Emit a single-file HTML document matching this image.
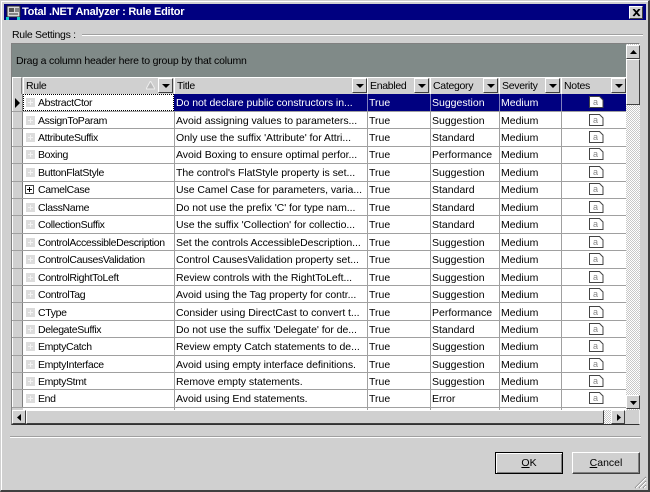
<!DOCTYPE html>
<html><head><meta charset="utf-8"><style>
html,body{margin:0;padding:0}
body{width:650px;height:492px;overflow:hidden;position:relative;background:#d0d0d0;font:10.5px/14px "Liberation Sans",sans-serif;color:#000}
.a{position:absolute}
#win{left:0;top:0;border-top:1px solid #d0d0d0;border-left:1px solid #d0d0d0;border-right:2px solid #404040;border-bottom:2px solid #404040;box-sizing:content-box;width:647px;height:489px;box-shadow:inset 1px 1px 0 #fff}
#tb{left:4px;top:4px;width:642px;height:16px;background:#000080;color:#fff;font:bold 11px/17px "Liberation Sans",sans-serif;letter-spacing:-.25px}
.r{position:absolute;left:12px;width:614px;height:18px;background:#fff}
.r span{position:absolute;top:2px;white-space:nowrap;overflow:hidden}
.r span.s{left:0;width:9px;top:0;height:18px;background:#d0d0d0;border-right:1px solid #808080;border-left:1px solid #fff}
.c1{left:26px;width:135px;letter-spacing:-.35px}.c2{left:164px;width:190px;letter-spacing:-.05px}.c3{left:357px;width:60px}.c4{left:420px;width:66px}.c5{left:489px;width:60px}
.v{position:absolute;top:0;width:1px;height:18px;background:#a0a0a0}
.l{position:absolute;left:12px;width:614px;height:1px;background:#a0a0a0}
.p{position:absolute;left:14px;top:4px;width:9px;height:9px;background:#dcdcdc}
.p:after{content:"";position:absolute;left:2px;top:4px;width:5px;height:1px;background:#f4f4f4}
.p:before{content:"";position:absolute;left:4px;top:2px;width:1px;height:5px;background:#f4f4f4}
.n{position:absolute;left:577px;top:2px}
.n path{stroke:#444}
.h{position:absolute;top:77px;height:16px;background:#d0d0d0;border-top:1px solid #fff;border-left:1px solid #fff;border-right:1px solid #808080;border-bottom:1px solid #808080;font-size:10.5px;line-height:16px;padding-left:2px;box-sizing:content-box;white-space:nowrap;overflow:hidden;letter-spacing:-.3px}
.f{position:absolute;right:1px;top:0;width:13px;height:13px;background:#d0d0d0;border-top:1px solid #fff;border-left:1px solid #fff;border-right:1px solid #404040;border-bottom:1px solid #404040}
.f:after{content:"";position:absolute;left:3px;top:5px;border-left:4px solid transparent;border-right:4px solid transparent;border-top:4px solid #000}
.b{position:absolute;background:#d0d0d0;border-top:1px solid #fff;border-left:1px solid #fff;border-right:1px solid #404040;border-bottom:1px solid #404040;box-sizing:border-box}
.sel,.sel span{color:#fff}
.btn{position:absolute;top:452px;width:68px;height:22px;box-sizing:border-box;background:#d0d0d0;text-align:center;font-size:10.5px;line-height:20px;border-top:1px solid #fff;border-left:1px solid #fff;border-right:1px solid #404040;border-bottom:1px solid #404040}
u{text-decoration:underline}
.chk{background-color:#e4e4e4;background-image:repeating-conic-gradient(#fff 0 25%,#c8c8c8 0 50%);background-size:2px 2px}
</style></head><body>
<div id="win" class="a"></div>
<div id="tb" class="a"><svg class="a" style="left:2px;top:1px" width="16" height="15"><rect x="1" y="1" width="13" height="11" fill="#d8d8d8" stroke="#222"/><rect x="3" y="3" width="5" height="4" fill="#555"/><path d="M9 4h4M9 6h4M3 9h9" stroke="#333"/><rect x="0" y="12" width="3" height="3" fill="#1cc"/><rect x="11" y="12" width="3" height="3" fill="#1cc"/></svg><span class="a" style="left:18px;top:0;white-space:nowrap">Total .NET Analyzer : Rule Editor</span>
<div class="b" style="left:625px;top:2px;width:14px;height:13px"><svg class="a" style="left:2px;top:2px" width="9" height="8"><path d="M1 0l6 7M2 0l6 7M7 0l-6 7M8 0l-6 7" stroke="#000"/></svg></div></div>
<div class="a" style="left:12px;top:28px;white-space:nowrap;letter-spacing:-.3px">Rule Settings :</div>
<div class="a" style="left:82px;top:34px;width:561px;height:1px;background:#a0a0a0;border-bottom:1px solid #fff"></div>

<div class="a" style="left:11px;top:43px;width:629px;height:382px;background:#d0d0d0;border-top:1px solid #808080;border-left:1px solid #808080;border-right:1px solid #f0f0f0;border-bottom:1px solid #303030;box-sizing:border-box"></div>
<div class="a" style="left:12px;top:44px;width:614px;height:33px;background:#808a88"></div>
<div class="a" style="left:16px;top:54px;white-space:nowrap;letter-spacing:-.2px">Drag a column header here to group by that column</div>

<div class="h" style="left:12px;width:8px;padding:0"></div>
<div class="h" style="left:23px;width:148px">Rule<svg class="a" style="left:122px;top:3px" width="9" height="9"><path d="M4.500 0L9 8H0z" fill="#bbb" stroke="#eee"/></svg><i class="f"></i></div>
<div class="h" style="left:174px;width:191px">Title<i class="f"></i></div>
<div class="h" style="left:367px;width:60px">Enabled<i class="f"></i></div>
<div class="h" style="left:430px;width:66px">Category<i class="f"></i></div>
<div class="h" style="left:499px;width:59px">Severity<i class="f"></i></div>
<div class="h" style="left:561px;width:63px">Notes<i class="f"></i></div>

<div class="r sel" style="top:94px"><span class="s"></span><span style="left:162px;top:0;width:452px;height:18px;background:#000080"></span><span class="c1" style="color:#000">AbstractCtor</span><span class="c2">Do not declare public constructors in...</span><span class="c3">True</span><span class="c4">Suggestion</span><span class="c5">Medium</span>
<svg class="a" style="left:3px;top:4px" width="6" height="10"><path d="M0 0l5 5-5 5z" fill="#000"/></svg><b class="p"></b><i class="a" style="left:11px;top:0;width:149px;height:15px;border:1px dotted #000"></i>
<i class="v" style="left:418px;background:#8080c0"></i><i class="v" style="left:487px;background:#8080c0"></i><i class="v" style="left:549px;background:#8080c0"></i><i class="v" style="left:355px;background:#8080c0"></i>
<svg class="n" width="15" height="12"><path d="M.5.5h10l3.500 3.500v7.500h-13.500z" fill="#fff"/><text x="4" y="9" font-size="9" fill="#888" font-family="Liberation Sans">a</text></svg></div>

<div class="r" style="top:112px"><span class="s"></span><b class="p"></b><span class="c1">AssignToParam</span><span class="c2">Avoid assigning values to parameters...</span><span class="c3">True</span><span class="c4">Suggestion</span><span class="c5">Medium</span><i class="v" style="left:162px"></i><i class="v" style="left:355px"></i><i class="v" style="left:418px"></i><i class="v" style="left:487px"></i><i class="v" style="left:549px"></i><svg class="n" width="15" height="12"><path d="M.5.5h10l3.500 3.500v7.500h-13.500z" fill="#fff"/><text x="4" y="9" font-size="9" fill="#888" font-family="Liberation Sans">a</text></svg></div>
<div class="r" style="top:129px"><span class="s"></span><b class="p"></b><span class="c1">AttributeSuffix</span><span class="c2">Only use the suffix 'Attribute' for Attri...</span><span class="c3">True</span><span class="c4">Standard</span><span class="c5">Medium</span><i class="v" style="left:162px"></i><i class="v" style="left:355px"></i><i class="v" style="left:418px"></i><i class="v" style="left:487px"></i><i class="v" style="left:549px"></i><svg class="n" width="15" height="12"><path d="M.5.5h10l3.500 3.500v7.500h-13.500z" fill="#fff"/><text x="4" y="9" font-size="9" fill="#888" font-family="Liberation Sans">a</text></svg></div>
<div class="r" style="top:146px"><span class="s"></span><b class="p"></b><span class="c1">Boxing</span><span class="c2">Avoid Boxing to ensure optimal perfor...</span><span class="c3">True</span><span class="c4">Performance</span><span class="c5">Medium</span><i class="v" style="left:162px"></i><i class="v" style="left:355px"></i><i class="v" style="left:418px"></i><i class="v" style="left:487px"></i><i class="v" style="left:549px"></i><svg class="n" width="15" height="12"><path d="M.5.5h10l3.500 3.500v7.500h-13.500z" fill="#fff"/><text x="4" y="9" font-size="9" fill="#888" font-family="Liberation Sans">a</text></svg></div>
<div class="r" style="top:164px"><span class="s"></span><b class="p"></b><span class="c1">ButtonFlatStyle</span><span class="c2">The control's FlatStyle property is set...</span><span class="c3">True</span><span class="c4">Suggestion</span><span class="c5">Medium</span><i class="v" style="left:162px"></i><i class="v" style="left:355px"></i><i class="v" style="left:418px"></i><i class="v" style="left:487px"></i><i class="v" style="left:549px"></i><svg class="n" width="15" height="12"><path d="M.5.5h10l3.500 3.500v7.500h-13.500z" fill="#fff"/><text x="4" y="9" font-size="9" fill="#888" font-family="Liberation Sans">a</text></svg></div>
<div class="r" style="top:181px"><span class="s"></span><svg class="a" style="left:13px;top:4px" width="9" height="9"><rect x=".5" y=".5" width="8" height="8" fill="#fff" stroke="#444"/><path d="M2 4.500h5M4.500 2v5" stroke="#000"/></svg><span class="c1">CamelCase</span><span class="c2">Use Camel Case for parameters, varia...</span><span class="c3">True</span><span class="c4">Standard</span><span class="c5">Medium</span><i class="v" style="left:162px"></i><i class="v" style="left:355px"></i><i class="v" style="left:418px"></i><i class="v" style="left:487px"></i><i class="v" style="left:549px"></i><svg class="n" width="15" height="12"><path d="M.5.5h10l3.500 3.500v7.500h-13.500z" fill="#fff"/><text x="4" y="9" font-size="9" fill="#888" font-family="Liberation Sans">a</text></svg></div>
<div class="r" style="top:199px"><span class="s"></span><b class="p"></b><span class="c1">ClassName</span><span class="c2">Do not use the prefix 'C' for type nam...</span><span class="c3">True</span><span class="c4">Standard</span><span class="c5">Medium</span><i class="v" style="left:162px"></i><i class="v" style="left:355px"></i><i class="v" style="left:418px"></i><i class="v" style="left:487px"></i><i class="v" style="left:549px"></i><svg class="n" width="15" height="12"><path d="M.5.5h10l3.500 3.500v7.500h-13.500z" fill="#fff"/><text x="4" y="9" font-size="9" fill="#888" font-family="Liberation Sans">a</text></svg></div>
<div class="r" style="top:216px"><span class="s"></span><b class="p"></b><span class="c1">CollectionSuffix</span><span class="c2">Use the suffix 'Collection' for collectio...</span><span class="c3">True</span><span class="c4">Standard</span><span class="c5">Medium</span><i class="v" style="left:162px"></i><i class="v" style="left:355px"></i><i class="v" style="left:418px"></i><i class="v" style="left:487px"></i><i class="v" style="left:549px"></i><svg class="n" width="15" height="12"><path d="M.5.5h10l3.500 3.500v7.500h-13.500z" fill="#fff"/><text x="4" y="9" font-size="9" fill="#888" font-family="Liberation Sans">a</text></svg></div>
<div class="r" style="top:234px"><span class="s"></span><b class="p"></b><span class="c1">ControlAccessibleDescription</span><span class="c2">Set the controls AccessibleDescription...</span><span class="c3">True</span><span class="c4">Suggestion</span><span class="c5">Medium</span><i class="v" style="left:162px"></i><i class="v" style="left:355px"></i><i class="v" style="left:418px"></i><i class="v" style="left:487px"></i><i class="v" style="left:549px"></i><svg class="n" width="15" height="12"><path d="M.5.5h10l3.500 3.500v7.500h-13.500z" fill="#fff"/><text x="4" y="9" font-size="9" fill="#888" font-family="Liberation Sans">a</text></svg></div>
<div class="r" style="top:251px"><span class="s"></span><b class="p"></b><span class="c1">ControlCausesValidation</span><span class="c2">Control CausesValidation property set...</span><span class="c3">True</span><span class="c4">Suggestion</span><span class="c5">Medium</span><i class="v" style="left:162px"></i><i class="v" style="left:355px"></i><i class="v" style="left:418px"></i><i class="v" style="left:487px"></i><i class="v" style="left:549px"></i><svg class="n" width="15" height="12"><path d="M.5.5h10l3.500 3.500v7.500h-13.500z" fill="#fff"/><text x="4" y="9" font-size="9" fill="#888" font-family="Liberation Sans">a</text></svg></div>
<div class="r" style="top:269px"><span class="s"></span><b class="p"></b><span class="c1">ControlRightToLeft</span><span class="c2">Review controls with the RightToLeft...</span><span class="c3">True</span><span class="c4">Suggestion</span><span class="c5">Medium</span><i class="v" style="left:162px"></i><i class="v" style="left:355px"></i><i class="v" style="left:418px"></i><i class="v" style="left:487px"></i><i class="v" style="left:549px"></i><svg class="n" width="15" height="12"><path d="M.5.5h10l3.500 3.500v7.500h-13.500z" fill="#fff"/><text x="4" y="9" font-size="9" fill="#888" font-family="Liberation Sans">a</text></svg></div>
<div class="r" style="top:286px"><span class="s"></span><b class="p"></b><span class="c1">ControlTag</span><span class="c2">Avoid using the Tag property for contr...</span><span class="c3">True</span><span class="c4">Suggestion</span><span class="c5">Medium</span><i class="v" style="left:162px"></i><i class="v" style="left:355px"></i><i class="v" style="left:418px"></i><i class="v" style="left:487px"></i><i class="v" style="left:549px"></i><svg class="n" width="15" height="12"><path d="M.5.5h10l3.500 3.500v7.500h-13.500z" fill="#fff"/><text x="4" y="9" font-size="9" fill="#888" font-family="Liberation Sans">a</text></svg></div>
<div class="r" style="top:304px"><span class="s"></span><b class="p"></b><span class="c1">CType</span><span class="c2">Consider using DirectCast to convert t...</span><span class="c3">True</span><span class="c4">Performance</span><span class="c5">Medium</span><i class="v" style="left:162px"></i><i class="v" style="left:355px"></i><i class="v" style="left:418px"></i><i class="v" style="left:487px"></i><i class="v" style="left:549px"></i><svg class="n" width="15" height="12"><path d="M.5.5h10l3.500 3.500v7.500h-13.500z" fill="#fff"/><text x="4" y="9" font-size="9" fill="#888" font-family="Liberation Sans">a</text></svg></div>
<div class="r" style="top:321px"><span class="s"></span><b class="p"></b><span class="c1">DelegateSuffix</span><span class="c2">Do not use the suffix 'Delegate' for de...</span><span class="c3">True</span><span class="c4">Standard</span><span class="c5">Medium</span><i class="v" style="left:162px"></i><i class="v" style="left:355px"></i><i class="v" style="left:418px"></i><i class="v" style="left:487px"></i><i class="v" style="left:549px"></i><svg class="n" width="15" height="12"><path d="M.5.5h10l3.500 3.500v7.500h-13.500z" fill="#fff"/><text x="4" y="9" font-size="9" fill="#888" font-family="Liberation Sans">a</text></svg></div>
<div class="r" style="top:338px"><span class="s"></span><b class="p"></b><span class="c1">EmptyCatch</span><span class="c2">Review empty Catch statements to de...</span><span class="c3">True</span><span class="c4">Suggestion</span><span class="c5">Medium</span><i class="v" style="left:162px"></i><i class="v" style="left:355px"></i><i class="v" style="left:418px"></i><i class="v" style="left:487px"></i><i class="v" style="left:549px"></i><svg class="n" width="15" height="12"><path d="M.5.5h10l3.500 3.500v7.500h-13.500z" fill="#fff"/><text x="4" y="9" font-size="9" fill="#888" font-family="Liberation Sans">a</text></svg></div>
<div class="r" style="top:356px"><span class="s"></span><b class="p"></b><span class="c1">EmptyInterface</span><span class="c2">Avoid using empty interface definitions.</span><span class="c3">True</span><span class="c4">Suggestion</span><span class="c5">Medium</span><i class="v" style="left:162px"></i><i class="v" style="left:355px"></i><i class="v" style="left:418px"></i><i class="v" style="left:487px"></i><i class="v" style="left:549px"></i><svg class="n" width="15" height="12"><path d="M.5.5h10l3.500 3.500v7.500h-13.500z" fill="#fff"/><text x="4" y="9" font-size="9" fill="#888" font-family="Liberation Sans">a</text></svg></div>
<div class="r" style="top:373px"><span class="s"></span><b class="p"></b><span class="c1">EmptyStmt</span><span class="c2">Remove empty statements.</span><span class="c3">True</span><span class="c4">Suggestion</span><span class="c5">Medium</span><i class="v" style="left:162px"></i><i class="v" style="left:355px"></i><i class="v" style="left:418px"></i><i class="v" style="left:487px"></i><i class="v" style="left:549px"></i><svg class="n" width="15" height="12"><path d="M.5.5h10l3.500 3.500v7.500h-13.500z" fill="#fff"/><text x="4" y="9" font-size="9" fill="#888" font-family="Liberation Sans">a</text></svg></div>
<div class="r" style="top:390px"><span class="s"></span><b class="p"></b><span class="c1">End</span><span class="c2">Avoid using End statements.</span><span class="c3">True</span><span class="c4">Error</span><span class="c5">Medium</span><i class="v" style="left:162px"></i><i class="v" style="left:355px"></i><i class="v" style="left:418px"></i><i class="v" style="left:487px"></i><i class="v" style="left:549px"></i><svg class="n" width="15" height="12"><path d="M.5.5h10l3.500 3.500v7.500h-13.500z" fill="#fff"/><text x="4" y="9" font-size="9" fill="#888" font-family="Liberation Sans">a</text></svg></div>
<div class="a" style="left:12px;top:408px;width:614px;height:3px;background:#fff"><i class="a" style="left:0;top:0;width:11px;height:3px;background:#d0d0d0"></i><i class="v" style="left:162px;height:3px"></i><i class="v" style="left:355px;height:3px"></i><i class="v" style="left:418px;height:3px"></i><i class="v" style="left:487px;height:3px"></i><i class="v" style="left:549px;height:3px"></i></div>

<div class="l" style="top:111px"></div><div class="l" style="top:128px"></div><div class="l" style="top:146px"></div><div class="l" style="top:163px"></div><div class="l" style="top:181px"></div><div class="l" style="top:198px"></div><div class="l" style="top:215px"></div><div class="l" style="top:233px"></div><div class="l" style="top:250px"></div><div class="l" style="top:268px"></div><div class="l" style="top:285px"></div><div class="l" style="top:302px"></div><div class="l" style="top:320px"></div><div class="l" style="top:337px"></div><div class="l" style="top:355px"></div><div class="l" style="top:372px"></div><div class="l" style="top:389px"></div><div class="l" style="top:407px"></div>

<!-- vertical scrollbar -->
<div class="a chk" style="left:626px;top:44px;width:14px;height:366px"></div>
<div class="b" style="left:626px;top:45px;width:14px;height:14px"><svg class="a" style="left:3px;top:4px" width="7" height="4"><path d="M3.500 0L7 4H0z" fill="#000"/></svg></div>
<div class="b" style="left:626px;top:59px;width:14px;height:46px"></div>
<div class="b" style="left:626px;top:395px;width:14px;height:14px"><svg class="a" style="left:3px;top:5px" width="7" height="4"><path d="M0 0h7L3.500 4z" fill="#000"/></svg></div>
<!-- horizontal scrollbar -->
<div class="b" style="left:12px;top:410px;width:14px;height:14px"><svg class="a" style="left:4px;top:3px" width="4" height="7"><path d="M4 0v7L0 3.500z" fill="#000"/></svg></div>
<div class="b" style="left:26px;top:410px;width:578px;height:14px"></div>
<div class="a chk" style="left:604px;top:410px;width:8px;height:14px"></div>
<div class="b" style="left:611px;top:410px;width:14px;height:14px"><svg class="a" style="left:5px;top:3px" width="4" height="7"><path d="M0 0l4 3.500L0 7z" fill="#000"/></svg></div>

<div class="a" style="left:10px;top:436px;width:631px;height:1px;background:#a0a0a0;border-bottom:1px solid #fff"></div>

<div class="btn" style="left:495px;border:1px solid #000;box-shadow:inset 1px 1px 0 #fff,inset -1px -1px 0 #808080"><u>O</u>K</div>
<div class="btn" style="left:572px;box-shadow:inset -1px -1px 0 #808080"><u>C</u>ancel</div>
<svg class="a" style="left:634px;top:476px" width="13" height="13"><path d="M12 1L1 12M12 5L5 12M12 9L9 12" stroke="#808080"/><path d="M12 2L2 12M12 6L6 12M12 10L10 12" stroke="#fff"/></svg>
</body></html>
